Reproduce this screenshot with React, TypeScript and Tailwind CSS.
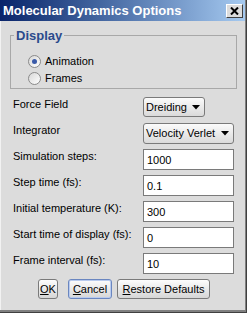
import React from "react";

const font = { fontFamily: '"Liberation Sans", Arial, sans-serif' };

function Radio({ checked, label }: { checked?: boolean; label: string }) {
  return (
    <div className="flex items-center h-[17px]">
      <div className="w-[13px] h-[13px] rounded-full border border-[#8a8a8a] bg-gradient-to-br from-[#d8d8d8] to-[#ffffff] flex items-center justify-center">
        {checked && <div className="w-[5px] h-[5px] rounded-full bg-[#3a5aa8]" />}
      </div>
      <span className="ml-[4px] text-[11px] leading-[13px] text-black">{label}</span>
    </div>
  );
}

function Select({ value, w, h }: { value: string; w: string; h: string }) {
  return (
    <div className={`${w} ${h} rounded-[3px] border border-[#7a7a7a] bg-gradient-to-b from-[#fbfbfb] to-[#dadada] flex items-center pl-[2px] pr-[4px]`}>
      <span className="text-[11px] leading-[13px] flex-1 text-black whitespace-nowrap">{value}</span>
      <svg width="8" height="5" viewBox="0 0 8 5"><path d="M0 0H8L4 4.5Z" fill="#000" /></svg>
    </div>
  );
}

function Input({ value }: { value: string }) {
  return (
    <div className="w-[91px] h-[21px] border border-[#7a7a7a] bg-white flex items-center pl-[3px] pt-[1px]">
      <span className="text-[11px] leading-[13px] text-black">{value}</span>
    </div>
  );
}

function Row({ label, children }: { label: string; children: React.ReactNode }) {
  return (
    <div className="flex h-[21px]">
      <div className="w-[142px] shrink-0 pl-[12px] pt-[1px] text-[11px] leading-[13px] text-black whitespace-nowrap">{label}</div>
      {children}
    </div>
  );
}

function Btn({ children, w, def }: { children: React.ReactNode; w: string; def?: boolean }) {
  return (
    <div
      className={`${w} h-[20px] rounded-[3px] border ${def ? "border-[#6a86c0] shadow-[inset_0_0_0_1px_#b9cbee]" : "border-[#7a7a7a]"} bg-gradient-to-b from-[#fdfdfd] to-[#d6d6d6] flex items-center justify-center text-[11px] leading-[13px] text-black`}
    >
      {children}
    </div>
  );
}

export default function App() {
  return (
    <div style={font} className="w-[247px] h-[313px] bg-[#404040] pr-[1px] pb-[1px]">
      <div className="w-full h-full bg-[#808080] pr-[1px] pb-[2px]">
        <div className="w-full h-full bg-[#dcdcdc] border-l border-t border-[#f2f2f2] flex flex-col">
          <div className="bg-gradient-to-r from-[#0a246a] to-[#a6caf0] flex items-center pl-[3px] pr-[2px] -ml-[1px] -mt-[1px] h-[21px]">
            <span className="flex-1 text-white font-bold text-[13px] leading-[15px]">Molecular Dynamics Options</span>
            <div className="w-[17px] h-[14px] bg-[#dcdcdc] border border-t-white border-l-white border-r-[#404040] border-b-[#404040] flex items-center justify-center">
              <svg width="9" height="8" viewBox="0 0 9 8">
                <path d="M1 0.5L8 7.5M8 0.5L1 7.5" stroke="#000" strokeWidth="2" />
              </svg>
            </div>
          </div>

          <div className="relative ml-[9px] mt-[14px] w-[227px] h-[54px] border border-[#a8a8a8]">
            <span className="absolute left-[3px] -top-[8px] px-[2px] bg-[#dcdcdc] text-[13px] leading-[15px] font-bold text-[#2a4a8c]">Display</span>
            <div className="pt-[17px] pl-[17px] flex flex-col">
              <Radio checked label="Animation" />
              <Radio label="Frames" />
            </div>
          </div>

          <div className="mt-[8px] flex flex-col gap-[5px]">
            <Row label="Force Field">
              <Select value="Dreiding" w="w-[62px]" h="h-[20px]" />
            </Row>
            <Row label="Integrator">
              <Select value="Velocity Verlet" w="w-[91px]" h="h-[21px]" />
            </Row>
            <Row label="Simulation steps:"><Input value="1000" /></Row>
            <Row label="Step time (fs):"><Input value="0.1" /></Row>
            <Row label="Initial temperature (K):"><Input value="300" /></Row>
            <Row label="Start time of display (fs):"><Input value="0" /></Row>
            <Row label="Frame interval (fs):"><Input value="10" /></Row>
          </div>

          <div className="mt-[5px] flex pl-[37px]">
            <Btn w="w-[20px]"><span><u>O</u>K</span></Btn>
            <div className="w-[10px]" />
            <Btn w="w-[44px]" def><span><u>C</u>ancel</span></Btn>
            <div className="w-[5px]" />
            <Btn w="w-[93px]"><span><u>R</u>estore Defaults</span></Btn>
          </div>
        </div>
      </div>
    </div>
  );
}
